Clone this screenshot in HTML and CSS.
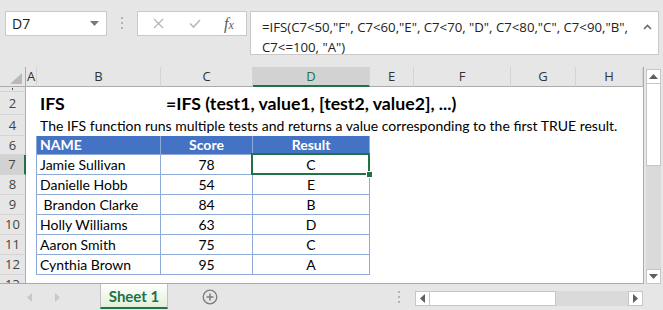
FILE: index.html
```html
<!DOCTYPE html>
<html lang="en">
<head>
    <meta charset="UTF-8">
    <title>IFS Function</title>
    <link rel="stylesheet" href="styles.css">
</head>
<body>

<div class="app">

    <!-- formula bar -->
    <div class="formula-row">
        <div class="name-box">
            <span>D7</span>
            <svg width="9" height="5" viewBox="0 0 9 5"><path d="M0 0h9L4.5 5z" fill="#7a7a7a"/></svg>
        </div>
        <div class="grip">
            <svg width="3" height="13" viewBox="0 0 3 13"><rect x="0" y="0" width="2" height="2" fill="#b3b3b3"/><rect x="0" y="5" width="2" height="2" fill="#b3b3b3"/><rect x="0" y="10" width="2" height="2" fill="#b3b3b3"/></svg>
        </div>
        <div class="fx-buttons">
            <div class="fx-slot slot-x">
                <svg width="11" height="11" viewBox="0 0 11 11"><path d="M1 1l9 9M10 1l-9 9" stroke="#b7b7b7" stroke-width="1.3" fill="none"/></svg>
            </div>
            <div class="fx-slot slot-ok">
                <svg width="12" height="9" viewBox="0 0 12 9"><path d="M1 4.5l3.5 3.5L11 1" stroke="#b7b7b7" stroke-width="1.6" fill="none"/></svg>
            </div>
            <div class="fx-slot slot-fx"><span class="fx">f<small>x</small></span></div>
        </div>
        <div class="formula-bar">
            <div class="formula-text">
                <div>=IFS(C7&lt;50,"F", C7&lt;60,"E", C7&lt;70, "D", C7&lt;80,"C", C7&lt;90,"B",</div>
                <div>C7&lt;=100, "A")</div>
            </div>
            <svg class="caret" width="9" height="6" viewBox="0 0 9 6"><path d="M1 5l3.5-3.5L8 5" stroke="#6a6a6a" stroke-width="1.6" fill="none"/></svg>
        </div>
    </div>

    <!-- sheet -->
    <div class="sheet-area">
        <div class="grid-wrap">
            <table class="grid">
                <colgroup>
                    <col class="c-rh"><col class="c-a"><col class="c-b"><col class="c-c"><col class="c-d">
                    <col class="c-e"><col class="c-f"><col class="c-g"><col class="c-h">
                </colgroup>
                <tr class="r-head">
                    <th class="corner"><svg width="12" height="11" viewBox="0 0 12 11"><path d="M12 0v11H0z" fill="#b9b9b9"/></svg></th>
                    <th class="ch">A</th><th class="ch">B</th><th class="ch">C</th><th class="ch sel-col">D</th>
                    <th class="ch">E</th><th class="ch">F</th><th class="ch">G</th><th class="ch">H</th>
                </tr>
                <tr class="r1">
                    <th class="rh"><div class="peek"></div></th><td colspan="8"></td>
                </tr>
                <tr class="r2">
                    <th class="rh">2</th><td></td>
                    <td class="title">IFS</td>
                    <td class="title formula" colspan="6">=IFS (test1, value1, [test2, value2], ...)</td>
                </tr>
                <tr class="r4">
                    <th class="rh">4</th><td></td>
                    <td class="desc" colspan="7">The IFS function runs multiple tests and returns a value corresponding to the first TRUE result.</td>
                </tr>
                <tr class="r6">
                    <th class="rh">6</th><td class="edge"></td>
                    <td class="hd">NAME</td><td class="hd mid">Score</td><td class="hd mid">Result</td><td colspan="4"></td>
                </tr>
                <tr class="row">
                    <th class="rh sel-row">7</th><td class="edge"></td>
                    <td class="cell">Jamie Sullivan</td><td class="cell mid">78</td><td class="cell mid active">C</td><td colspan="4"></td>
                </tr>
                <tr class="row">
                    <th class="rh">8</th><td class="edge"></td>
                    <td class="cell">Danielle Hobb</td><td class="cell mid">54</td><td class="cell mid">E</td><td colspan="4"></td>
                </tr>
                <tr class="row">
                    <th class="rh">9</th><td class="edge"></td>
                    <td class="cell">&nbsp;Brandon Clarke</td><td class="cell mid">84</td><td class="cell mid">B</td><td colspan="4"></td>
                </tr>
                <tr class="row">
                    <th class="rh">10</th><td class="edge"></td>
                    <td class="cell">Holly Williams</td><td class="cell mid">63</td><td class="cell mid">D</td><td colspan="4"></td>
                </tr>
                <tr class="row">
                    <th class="rh">11</th><td class="edge"></td>
                    <td class="cell">Aaron Smith</td><td class="cell mid">75</td><td class="cell mid">C</td><td colspan="4"></td>
                </tr>
                <tr class="row">
                    <th class="rh">12</th><td class="edge"></td>
                    <td class="cell">Cynthia Brown</td><td class="cell mid">95</td><td class="cell mid">A</td><td colspan="4"></td>
                </tr>
                <tr class="row">
                    <th class="rh">13</th><td colspan="8"></td>
                </tr>
            </table>
        </div>

        <div class="vscroll">
            <div class="sb-btn"><svg width="9" height="5" viewBox="0 0 9 5"><path d="M0 5h9L4.5 0z" fill="#5f5f5f"/></svg></div>
            <div class="v-thumb"></div>
            <div class="sb-track"></div>
            <div class="sb-btn"><svg width="9" height="5" viewBox="0 0 9 5"><path d="M0 0h9L4.5 5z" fill="#5f5f5f"/></svg></div>
        </div>
    </div>

    <!-- sheet tabs -->
    <div class="tab-bar">
        <div class="tab-nav">
            <svg width="5" height="9" viewBox="0 0 5 9"><path d="M5 0v9L0 4.5z" fill="#c8c8c8"/></svg>
            <svg width="5" height="9" viewBox="0 0 5 9"><path d="M0 0v9l5-4.5z" fill="#c8c8c8"/></svg>
        </div>
        <div class="sheet-tab">Sheet 1</div>
        <div class="add-sheet">
            <svg width="16" height="16" viewBox="0 0 16 16"><circle cx="8" cy="8" r="6.8" stroke="#7d7d7d" stroke-width="1.3" fill="none"/><path d="M8 4.5v7M4.5 8h7" stroke="#7d7d7d" stroke-width="1.5"/></svg>
        </div>
        <div class="spacer"></div>
        <div class="grip">
            <svg width="3" height="13" viewBox="0 0 3 13"><rect x="0" y="0" width="2" height="2" fill="#b3b3b3"/><rect x="0" y="5" width="2" height="2" fill="#b3b3b3"/><rect x="0" y="10" width="2" height="2" fill="#b3b3b3"/></svg>
        </div>
        <div class="hscroll">
            <div class="sb-btn"><svg width="5" height="9" viewBox="0 0 5 9"><path d="M5 0v9L0 4.5z" fill="#5f5f5f"/></svg></div>
            <div class="h-thumb"></div>
            <div class="sb-track"></div>
            <div class="sb-btn"><svg width="5" height="9" viewBox="0 0 5 9"><path d="M0 0v9l5-4.5z" fill="#5f5f5f"/></svg></div>
        </div>
    </div>

</div>

</body>
</html>
```

FILE: styles.css
```css
body {
    margin: 0;
    background-color: #e6e6e6;
    font-family: Lato, "Open Sans", sans-serif;
    color: #000;
}
.app {
    width: 663px;
    height: 310px;
    overflow: hidden;
    display: flex;
    flex-direction: column;
    background-color: #e6e6e6;
}

/* formula bar */
.formula-row {
    height: 67px;
    flex: none;
    display: flex;
    align-items: flex-start;
    padding: 11px 0 0 5px;
    box-sizing: border-box;
}
.name-box {
    width: 102px;
    height: 25px;
    box-sizing: border-box;
    background-color: #fff;
    border: 1px solid #c9c9c9;
    display: flex;
    align-items: center;
    justify-content: space-between;
    padding: 0 7px 0 6px;
    font-family: "Open Sans", sans-serif;
    font-size: 14px;
    color: #222;
}
.grip {
    width: 30px;
    height: 25px;
    display: flex;
    align-items: center;
    justify-content: center;
}
.fx-buttons {
    width: 110px;
    height: 25px;
    box-sizing: border-box;
    background-color: #fff;
    border: 1px solid #c9c9c9;
    display: flex;
}
.fx-slot {
    display: flex;
    align-items: center;
    justify-content: center;
}
.slot-x { width: 40px; }
.slot-ok { width: 34px; }
.slot-fx { width: 34px; }
.fx {
    font-family: "Liberation Serif", serif;
    font-style: italic;
    font-size: 16px;
    color: #5a5a5a;
}
.fx small {
    font-size: 12px;
}
.formula-bar {
    margin-left: 3px;
    width: 409px;
    height: 44px;
    box-sizing: border-box;
    background-color: #fff;
    border: 1px solid #c9c9c9;
    display: flex;
    justify-content: space-between;
    padding: 5px 6px 0 11px;
}
.formula-text {
    font-family: "Open Sans", sans-serif;
    font-size: 13.2px;
    line-height: 20px;
    color: #222;
    white-space: nowrap;
}
.caret {
    margin-top: 7px;
}

/* sheet */
.sheet-area {
    height: 217px;
    flex: none;
    display: flex;
}
.grid-wrap {
    width: 643px;
    height: 216px;
    overflow: hidden;
    background-color: #fff;
    border-right: 1px solid #ababab;
    border-bottom: 1px solid #ababab;
}
.grid {
    table-layout: fixed;
    width: 643px;
    border-collapse: separate;
    border-spacing: 0;
}
th, td {
    padding: 0;
    line-height: 1;
    white-space: nowrap;
    overflow: visible;
}
.c-rh { width: 26px; }
.c-a { width: 11px; }
.c-b { width: 124px; }
.c-c { width: 92px; }
.c-d { width: 117px; }
.c-e { width: 44px; }
.c-f { width: 97px; }
.c-g { width: 65px; }
.c-h { width: 67px; }

.r-head { height: 20px; }
.r1 { height: 5px; }
.r2 { height: 23px; }
.r4 { height: 21px; }
.r6 { height: 19px; }
.row { height: 20px; }

.corner, .ch, .rh {
    background-color: #e6e6e6;
    font-family: "Open Sans", sans-serif;
    font-weight: normal;
    font-size: 13px;
    color: #333;
    text-align: center;
}
.corner {
    text-align: right;
    vertical-align: bottom;
    padding: 0 3px 2px 0;
    border-right: 1px solid #ababab;
    border-bottom: 1px solid #ababab;
}
.corner svg {
    display: block;
    margin-left: auto;
}
.ch {
    border-right: 1px solid #d4d4d4;
    border-bottom: 1px solid #ababab;
}
.ch.sel-col {
    background-color: #d2d2d2;
    color: #217346;
    border-bottom: 2px solid #217346;
}
.rh {
    border-right: 1px solid #ababab;
    border-bottom: 1px solid #d4d4d4;
    color: #444;
}
.rh.sel-row {
    background-color: #d2d2d2;
    border-right: 2px solid #217346;
}
.peek {
    width: 1px;
    height: 2px;
    margin: 0 auto;
    background-color: #555;
}

.title {
    font-weight: bold;
    font-size: 17.7px;
    padding-left: 3px;
}
.title.formula {
    padding-left: 5px;
}
.desc {
    font-size: 14px;
    padding-left: 3px;
}
.edge {
    border-right: 1px solid #8eaadb;
}
.hd {
    background-color: #4472c4;
    color: #fff;
    font-weight: bold;
    font-size: 14px;
    padding-left: 3px;
    border-right: 1px solid #8eaadb;
    border-bottom: 1px solid #8eaadb;
}
.cell {
    font-size: 14px;
    padding-left: 3px;
    border-right: 1px solid #8eaadb;
    border-bottom: 1px solid #8eaadb;
}
.mid {
    text-align: center;
    padding-left: 0;
}
.active {
    position: relative;
}
.active::before {
    content: "";
    position: absolute;
    left: -2px;
    top: -2px;
    right: -1px;
    bottom: -1px;
    border: 2px solid #217346;
}
.active::after {
    content: "";
    position: absolute;
    right: -4px;
    bottom: -4px;
    width: 5px;
    height: 5px;
    background-color: #217346;
    border: 1px solid #fff;
}

/* scrollbars */
.vscroll {
    margin: 2px 0 0 2px;
    width: 15px;
    height: 215px;
    display: flex;
    flex-direction: column;
}
.sb-btn {
    flex: none;
    width: 15px;
    height: 15px;
    box-sizing: border-box;
    background-color: #fff;
    border: 1px solid #c6c6c6;
    display: flex;
    align-items: center;
    justify-content: center;
}
.sb-track {
    flex: 1;
    background-color: #dadada;
}
.v-thumb {
    height: 82px;
    flex: none;
    box-sizing: border-box;
    background-color: #fff;
    border: 1px solid #c6c6c6;
    border-top: none;
}

/* sheet tabs */
.tab-bar {
    height: 26px;
    flex: none;
    display: flex;
    align-items: stretch;
}
.tab-nav {
    width: 100px;
    display: flex;
    align-items: center;
    gap: 23px;
    padding-left: 27px;
    box-sizing: border-box;
}
.sheet-tab {
    width: 68px;
    box-sizing: border-box;
    background: linear-gradient(#ffffff, #e3efd9);
    border-left: 1px solid #c0c0c0;
    border-right: 1px solid #c0c0c0;
    border-bottom: 2px solid #217346;
    margin-bottom: 1px;
    color: #217346;
    font-weight: bold;
    font-size: 15px;
    display: flex;
    align-items: center;
    justify-content: center;
}
.add-sheet {
    width: 84px;
    display: flex;
    align-items: center;
    justify-content: center;
}
.spacer {
    flex: 1;
}
.tab-bar .grip {
    width: 32px;
    height: auto;
}
.hscroll {
    width: 228px;
    height: 15px;
    margin: 7px 20px 0 0;
    display: flex;
}
.h-thumb {
    width: 126px;
    flex: none;
    box-sizing: border-box;
    background-color: #fff;
    border: 1px solid #c6c6c6;
    border-left: none;
}
```
